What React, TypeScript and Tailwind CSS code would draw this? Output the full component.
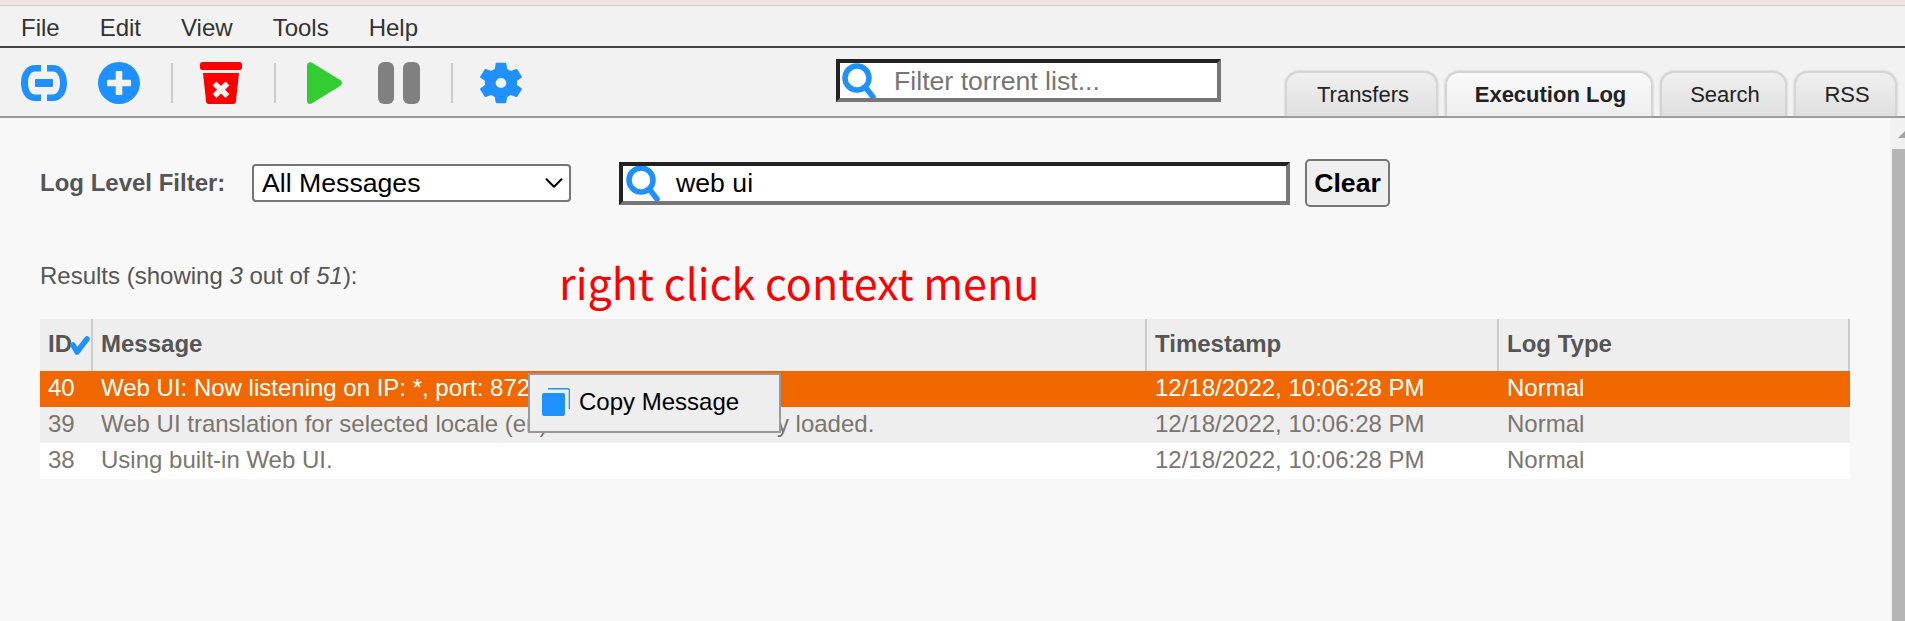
import { ChevronDown } from "lucide-react";

const MENU_ITEMS = ["File", "Edit", "View", "Tools", "Help"];

const ROWS = [
  { id: 40, message: "Web UI: Now listening on IP: *, port: 8727", rowClass: "bg-[#f06700] text-white" },
  { id: 39, message: "Web UI translation for selected locale (en) has been successfully loaded.", rowClass: "bg-[#eeeeee] text-[#7b7570]" },
  { id: 38, message: "Using built-in Web UI.", rowClass: "bg-white text-[#7b7570]" },
];

function SearchIcon({ className }: { className: string }) {
  return (
    <svg viewBox="0 0 34 36" className={className} fill="none" stroke="#1e90ff" strokeLinecap="round">
      <circle cx="15" cy="15" r="12" strokeWidth="5.5" />
      <path d="M24 25l7 9" strokeWidth="5.5" />
    </svg>
  );
}

function Separator() {
  return <div className="h-10 w-[2px] bg-[#cccccc]" />;
}

function Toolbar() {
  return (
    <div className="flex items-center">
      <svg viewBox="0 0 46 36" className="ml-[21px] h-[36px] w-[46px]" fill="#1e90ff">
        <path d="M20 0H14C6 0 0 7 0 18s6 18 14 18h6v-6.5h-6C10 29.500 7 25 7 18S10 6.500 14 6.500h6zM26 0h6c8 0 14 7 14 18s-6 18-14 18h-6v-6.500h6c4 0 7-4.500 7-11.500S36 6.500 32 6.500h-6z" />
        <rect x="14" y="14" width="18" height="8" rx="1" />
      </svg>
      <svg viewBox="0 0 42 42" className="ml-[31px] h-[42px] w-[42px]">
        <circle cx="21" cy="21" r="21" fill="#1e90ff" />
        <rect x="17.700" y="9" width="6.600" height="24" rx="1" fill="#f2f2f2" />
        <rect x="9" y="17.700" width="24" height="6.600" rx="1" fill="#f2f2f2" />
      </svg>
      <div className="ml-[31px]"><Separator /></div>
      <svg viewBox="0 0 42 42" className="ml-[27px] h-[42px] w-[42px]">
        <rect x="0" y="0" width="42" height="8" rx="2.500" fill="#ff0000" />
        <path d="M3 11h36l-3 28a3 3 0 0 1-3 3H9a3 3 0 0 1-3-3z" fill="#ff0000" />
        <path d="M14.500 21.500l13 12.500M27.500 21.500l-13 12.500" stroke="#f2f2f2" strokeWidth="5.500" />
      </svg>
      <div className="ml-[32px]"><Separator /></div>
      <svg viewBox="0 0 35 42" className="ml-[31px] h-[42px] w-[35px]">
        <path d="M0 3.500C0 .8 2.500-.7 4.600.6l28.600 17.500c2.300 1.400 2.300 4.400 0 5.800L4.600 41.400C2.500 42.700 0 41.200 0 38.500z" fill="#32cd32" />
      </svg>
      <svg viewBox="0 0 42 42" className="ml-[36px] h-[42px] w-[42px]" fill="#808080">
        <rect x="0" y="0" width="16" height="42" rx="6" />
        <rect x="25" y="0" width="17" height="42" rx="6" />
      </svg>
      <div className="ml-[31px]"><Separator /></div>
      <svg viewBox="2.600 2 18.800 20" className="ml-[27px] h-[42px] w-[42px]" preserveAspectRatio="none" fill="#1e90ff">
        <path fillRule="evenodd" d="M19.140 12.940c.04-.3.06-.61.06-.94s-.02-.64-.07-.94l2.030-1.580a.49.49 0 0 0 .12-.61l-1.920-3.320a.49.49 0 0 0-.59-.22l-2.390.96a7 7 0 0 0-1.620-.94l-.36-2.540a.48.48 0 0 0-.48-.41h-3.840a.48.48 0 0 0-.47.41l-.36 2.540c-.59.24-1.130.57-1.620.94l-2.390-.96a.48.48 0 0 0-.59.22L2.740 8.870a.48.48 0 0 0 .12.61l2.030 1.580c-.05.3-.09.63-.09.94s.02.64.07.94l-2.030 1.580a.49.49 0 0 0-.12.61l1.920 3.320c.12.22.37.29.59.22l2.390-.96c.5.38 1.030.7 1.620.94l.36 2.540c.05.24.24.41.48.41h3.840c.24 0 .44-.17.47-.41l.36-2.540c.59-.24 1.130-.56 1.620-.94l2.390.96c.22.08.47 0 .59-.22l1.920-3.320a.48.48 0 0 0-.12-.61zM12 14.400a2.400 2.400 0 1 1 0-4.800 2.400 2.400 0 0 1 0 4.800z" />
      </svg>
    </div>
  );
}

function Tab({ label, active, width }: { label: string; active?: boolean; width: string }) {
  return (
    <div
      className={`flex h-[45px] items-center justify-center rounded-t-[14px] border-2 border-b-0 border-[#d4d4d4] pl-[3px] text-[22px] text-[#222222] shadow-[0_0_2px_#bbbbbb] ${width} ${
        active ? "bg-gradient-to-b from-[#fafafa] to-[#eeeeee] font-bold" : "bg-gradient-to-b from-[#f0f0f0] to-[#dfdfdf]"
      }`}
    >
      {label}
    </div>
  );
}

function HeaderCell({ label, className }: { label: string; className: string }) {
  return (
    <div className={`flex items-center border-r-2 border-[#cccccc] pb-[2px] pl-[8px] ${className}`}>{label}</div>
  );
}

export default function App() {
  return (
    <div className="relative flex h-[621px] flex-col overflow-hidden bg-[#f8f8f8] font-['Liberation_Sans',Arial,sans-serif]">
      {/* top strip */}
      <div className="h-[6px] border-b border-[#d5cdc9] bg-[#efe4df]" />

      {/* menu bar */}
      <div className="flex h-[42px] items-center gap-[40px] border-b-2 border-[#444444] bg-[#f2f2f2] pl-[21px] pt-[4px] text-[24px] text-[#333333]">
        {MENU_ITEMS.map((item) => (
          <span key={item}>{item}</span>
        ))}
      </div>

      {/* toolbar */}
      <div className="flex h-[70px] items-start border-b-2 border-[#999999] bg-[#f2f2f2]">
        <div className="mt-[14px]">
          <Toolbar />
        </div>
        <div className="ml-[314px] mt-[11px] flex h-[43px] w-[385px] items-center overflow-hidden border-[4px] border-t-[#222222] border-l-[#222222] border-r-[#777777] border-b-[#777777] bg-white">
          <SearchIcon className="ml-[2px] h-[36px] w-[34px] shrink-0" />
          <span className="ml-[18px] text-[26.67px] text-[#757575]">Filter torrent list...</span>
        </div>
        <div className="ml-auto mr-[8px] flex gap-[7px] self-end">
          <Tab label="Transfers" width="w-[153px]" />
          <Tab label="Execution Log" active width="w-[208px]" />
          <Tab label="Search" width="w-[127px]" />
          <Tab label="RSS" width="w-[103px]" />
        </div>
      </div>

      {/* content */}
      <div className="flex min-h-0 flex-1">
        <div className="relative min-w-0 flex-1 pl-[40px] pr-[40px]">
          <div className="mt-[41px] flex h-[48px] items-center">
            <span className="w-[212px] text-[24px] font-bold text-[#555555]">Log Level Filter:</span>
            <div className="flex h-[38px] w-[319px] items-center justify-between rounded-[4px] border-2 border-[#767676] bg-white pl-[8px] text-[26.67px] text-black">
              All Messages
              <ChevronDown className="h-[30px] w-[30px]" strokeWidth={1.6} />
            </div>
            <div className="ml-[48px] flex h-[43px] w-[671px] items-center overflow-hidden border-[4px] border-t-[#222222] border-l-[#222222] border-r-[#777777] border-b-[#777777] bg-white">
              <SearchIcon className="ml-[3px] h-[36px] w-[34px] shrink-0" />
              <span className="ml-[16px] text-[26.67px] text-black">web ui</span>
            </div>
            <div className="ml-[15px] flex h-[48px] w-[85px] items-center justify-center rounded-[5px] border-2 border-[#767676] bg-[#efefef] text-[26.67px] font-bold text-black">
              Clear
            </div>
          </div>

          <div className="mt-[51px] text-[24px] leading-[36px] text-[#555555]">
            Results (showing <i>3</i> out of <i>51</i>):
          </div>

          <div className="mt-[25px] w-[1810px] text-[24px]">
            <div className="flex h-[52px] bg-[#eeeeee] font-bold text-[#555555]">
              <HeaderCell label="ID" className="w-[53px]" />
              <HeaderCell label="Message" className="w-[1054px]" />
              <HeaderCell label="Timestamp" className="w-[352px]" />
              <HeaderCell label="Log Type" className="w-[351px]" />
            </div>
            {ROWS.map((row) => (
              <div key={row.id} className={`flex h-[36px] items-center pb-[2px] leading-[34px] ${row.rowClass}`}>
                <div className="w-[53px] pl-[8px]">{row.id}</div>
                <div className="w-[1054px] truncate pl-[8px]">{row.message}</div>
                <div className="w-[352px] pl-[8px]">12/18/2022, 10:06:28 PM</div>
                <div className="w-[351px] pl-[8px]">Normal</div>
              </div>
            ))}
          </div>

          {/* sort check over the ID header */}
          <svg viewBox="0 0 22 20" className="absolute left-[68px] top-[217px] h-[20px] w-[22px]" fill="none" stroke="#1e90ff" strokeWidth="5.5" strokeLinecap="round" strokeLinejoin="round">
            <path d="M5 10l4 7L19 4" />
          </svg>

          {/* annotation */}
          <div className="absolute left-[559px] top-[133px] font-['Noto_Sans_CJK_SC',sans-serif] text-[43px] leading-[60px] text-[#ff0000]">
            right click context menu
          </div>

          {/* context menu */}
          <div className="absolute left-[528px] top-[255px] flex h-[60px] w-[253px] items-center border-2 border-[#999999] bg-[#eeeeee] text-[24px] text-black">
            <svg viewBox="0 0 28 28" className="ml-[12px] -mt-[2px] h-[28px] w-[28px]">
              <path d="M6 .8h19.500a2 2 0 0 1 2 2V21" fill="none" stroke="#1e90ff" strokeWidth="1.500" />
              <rect x="0" y="5" width="23" height="23" rx="2" fill="#1e90ff" />
            </svg>
            <span className="ml-[9px] -mt-[2px]">Copy Message</span>
          </div>
        </div>

        {/* scrollbar */}
        <div className="flex w-[15px] flex-col bg-[#f1f1f1]">
          <svg viewBox="0 0 15 31" className="h-[31px] w-[15px]">
            <path d="M15 13v7H8z" fill="#a3a3a3" />
          </svg>
          <div className="ml-[2px] flex-1 bg-[#b5b5b5]" />
        </div>
      </div>
    </div>
  );
}
